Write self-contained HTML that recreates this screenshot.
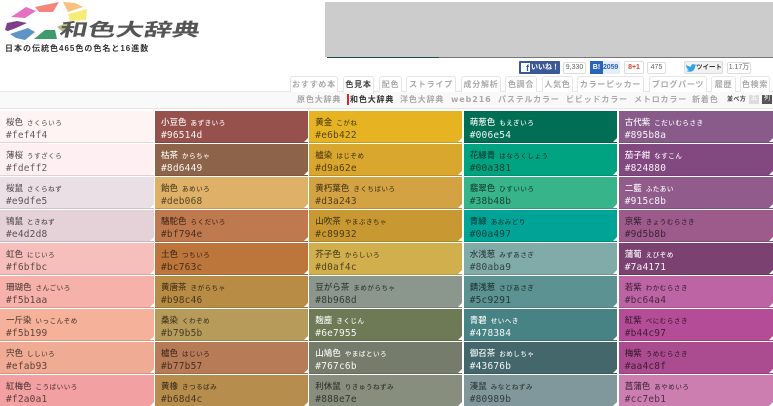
<!DOCTYPE html>
<html lang="ja"><head><meta charset="utf-8"><title>和色大辞典</title>
<style>
*{box-sizing:border-box;margin:0;padding:0}
html,body{width:773px;height:406px;overflow:hidden;background:#fff}
body{position:relative;font-family:"Liberation Sans","Noto Sans CJK JP",sans-serif;color:#333}
.a{position:absolute;white-space:nowrap}
.t{position:absolute;top:76px;height:16px;border:1px solid #e6e6e6;border-bottom:0;border-radius:3px 3px 0 0;background:#fff;color:#aaa;font-size:8px;letter-spacing:.75px;line-height:15px;text-align:center;font-weight:700;white-space:nowrap;overflow:hidden}
.s{position:absolute;top:94px;font-size:8px;letter-spacing:.85px;line-height:11px;color:#aaa;font-weight:700;white-space:nowrap}
.c{position:absolute;top:110.5px}
.r{position:relative;height:32.1px;margin-bottom:1px;padding:5px 0 0 6px;color:rgba(0,0,0,.62);border-bottom:1px solid rgba(0,0,0,.12);overflow:hidden;white-space:nowrap;font-size:8.5px;line-height:12px}
.r:after{content:"";position:absolute;right:0;bottom:0;border-style:solid;border-width:0 0 4px 4px;border-color:transparent transparent #fff transparent}
.w{color:rgba(255,255,255,.92)}
.r b{font-size:8.5px;font-weight:500;line-height:12px;margin-right:4px}
.r i{font-style:normal;font-size:6.5px;letter-spacing:.55px;font-weight:500;line-height:12px}
.r u{display:block;text-decoration:none;font-family:"DejaVu Sans Mono","Liberation Mono",monospace;font-size:9.5px;letter-spacing:.2px;line-height:11px;font-weight:400}
.n{position:absolute;top:62px;height:12px;border:1px solid #ddd;background:#fff;font-size:7px;line-height:10px;text-align:center;color:#666;border-radius:2px}
</style></head><body>

<svg class="a" style="left:0;top:0" width="100" height="42" viewBox="0 0 100 42">
<polygon points="11,17 26,7 36,11 25,18" fill="#e56fc0"/>
<polygon points="35,7 59,2 53,12 39,12" fill="#f4867c"/>
<polygon points="63,2 75,3 83,7 68,12" fill="#f8c27e"/>
<polygon points="68,14 87,9 86,20 70,21" fill="#f8ec78"/>
<polygon points="57,27 68,22 68,36" fill="#b5b980"/>
<polygon points="34,39 45,30 55,30 57,39" fill="#3f9a6c"/>
<polygon points="10,34 28,28 35,32 25,40 16,38" fill="#5e94c6"/>
<polygon points="5,30 7,23 17,21 27,23 16,28 8,31" fill="#7c3f88"/>
</svg>
<div class="a" style="left:62px;top:20px;font-size:18px;line-height:20px;font-weight:700;color:#555;transform-origin:0 0;transform:skewX(-12deg) scaleX(1.56);letter-spacing:0">和色大辞典</div>
<div class="a" style="left:5px;top:43px;font-size:8px;line-height:12px;font-weight:700;color:#333;letter-spacing:1px">日本の伝統色465色の色名と16進数</div>

<div class="a" style="left:325px;top:2px;width:448px;height:55px;background:#cccccc"></div>
<div class="a" style="left:327px;top:57px;width:112px;height:1px;background:#1f4a4a"></div>
<div class="a" style="left:439px;top:57px;width:334px;height:1px;background:#777"></div>

<div class="a" style="left:519px;top:61px;width:41px;height:13px;background:#3b5998;color:#fff;font-size:7px;line-height:13px;font-weight:700;padding-left:12px;border-radius:1px">いいね！</div>
<div class="a" style="left:521px;top:63px;width:9px;height:9px;background:#fff;color:#3b5998;font-size:9px;line-height:10px;text-align:right;font-weight:700;padding-right:1px">f</div>
<div class="n" style="left:563px;width:23px">9,330</div>
<div class="a" style="left:590px;top:61px;width:30px;height:13px;background:#e4eefa"></div>
<div class="a" style="left:590px;top:61px;width:13px;height:13px;background:#2a64b8;color:#fff;font-size:7px;line-height:13px;text-align:center;font-weight:700">B!</div>
<div class="a" style="left:603px;top:61px;font-size:7px;line-height:13px;color:#2a64b8;font-weight:700;letter-spacing:-.1px">2059</div>
<div class="a" style="left:624px;top:61px;width:20px;height:13px;border:1px solid #ddd;color:#d9432f;font-size:7px;line-height:11px;text-align:center;font-weight:700;border-radius:2px">8+1</div>
<div class="n" style="left:647px;width:19px">475</div>
<div class="a" style="left:684px;top:61px;width:39px;height:13px;border:1px solid #ddd;background:#f2f2f2;font-size:6.5px;line-height:11px;padding-left:11px;font-weight:700;color:#333;border-radius:2px">ツイート</div>
<svg class="a" style="left:686px;top:63px" width="10" height="9" viewBox="0 0 10 9"><path d="M0 1.5C1.5 3 3 3.6 5 3.7 4.8 1.5 7.2.3 8.6 1.6L10 1.1 9.2 2.3 10 2.1 9.2 3C9.2 6.2 6.5 9 3.6 8.8 2.2 8.8 1 8.4 0 7.8 1.2 7.9 2.2 7.6 3 7 1.9 6.9 1.3 6.3 1 5.4H1.8C.8 5 .2 4.2.2 3.2L1 3.4C.2 2.8 0 2.2 0 1.5Z" fill="#2ea3e0"/></svg>
<div class="n" style="left:727px;width:24px">1.17万</div>

<div class="a" style="left:0;top:91px;width:773px;height:18px;background:#f9f9f9;border-top:1px solid #e8e8e8;border-bottom:1px solid #e4e4e4"></div>

<div class="t" style="left:290px;width:48px">おすすめ本</div>
<div class="t" style="left:343px;width:31px;color:#444;height:17px;z-index:2">色見本</div>
<div class="t" style="left:379px;width:23px">配色</div>
<div class="t" style="left:406px;width:50px">ストライプ</div>
<div class="t" style="left:461px;width:40px">成分解析</div>
<div class="t" style="left:505px;width:32px">色調合</div>
<div class="t" style="left:542px;width:31px">人気色</div>
<div class="t" style="left:577px;width:67px">カラーピッカー</div>
<div class="t" style="left:649px;width:58px">ブログパーツ</div>
<div class="t" style="left:711px;width:25px">履歴</div>
<div class="t" style="left:740px;width:30px">色検索</div>

<div class="s" style="left:297px">原色大辞典</div>
<div class="a" style="left:347px;top:94px;width:2px;height:11px;background:#e3222c"></div>
<div class="s" style="left:350px;color:#333">和色大辞典</div>
<div class="s" style="left:400px">洋色大辞典</div>
<div class="s" style="left:451px;font-family:'DejaVu Sans',sans-serif;letter-spacing:.9px;font-size:8px">web216</div>
<div class="s" style="left:498px">パステルカラー</div>
<div class="s" style="left:566px">ビビッドカラー</div>
<div class="s" style="left:634px">メトロカラー</div>
<div class="s" style="left:692px">新着色</div>
<div class="s" style="left:727px;top:95px;color:#444;font-size:6px;letter-spacing:.4px">並べ方</div>
<div class="a" style="left:749px;top:95px;width:10px;height:9px;background:#ddd;color:#fff;font-size:6px;line-height:9px;text-align:center">五</div>
<div class="a" style="left:762px;top:95px;width:10px;height:9px;background:#555;color:#fff;font-size:6px;line-height:9px;text-align:center">列</div>

<div class="c" style="left:0;width:153.5px">
<div class="r" style="background:#fef4f4"><b>桜色</b><i>さくらいろ</i><u>#fef4f4</u></div>
<div class="r" style="background:#fdeff2"><b>薄桜</b><i>うすざくら</i><u>#fdeff2</u></div>
<div class="r" style="background:#e9dfe5"><b>桜鼠</b><i>さくらねず</i><u>#e9dfe5</u></div>
<div class="r" style="background:#e4d2d8"><b>鴇鼠</b><i>ときねず</i><u>#e4d2d8</u></div>
<div class="r" style="background:#f6bfbc"><b>虹色</b><i>にじいろ</i><u>#f6bfbc</u></div>
<div class="r" style="background:#f5b1aa"><b>珊瑚色</b><i>さんごいろ</i><u>#f5b1aa</u></div>
<div class="r" style="background:#f5b199"><b>一斤染</b><i>いっこんぞめ</i><u>#f5b199</u></div>
<div class="r" style="background:#efab93"><b>宍色</b><i>ししいろ</i><u>#efab93</u></div>
<div class="r" style="background:#f2a0a1"><b>紅梅色</b><i>こうばいいろ</i><u>#f2a0a1</u></div>
</div>

<div class="c" style="left:155px;width:153px">
<div class="r w" style="background:#96514d"><b>小豆色</b><i>あずきいろ</i><u>#96514d</u></div>
<div class="r w" style="background:#8d6449"><b>枯茶</b><i>からちゃ</i><u>#8d6449</u></div>
<div class="r" style="background:#deb068"><b>飴色</b><i>あめいろ</i><u>#deb068</u></div>
<div class="r" style="background:#bf794e"><b>駱駝色</b><i>らくだいろ</i><u>#bf794e</u></div>
<div class="r" style="background:#bc763c"><b>土色</b><i>つちいろ</i><u>#bc763c</u></div>
<div class="r" style="background:#b98c46"><b>黄唐茶</b><i>きがらちゃ</i><u>#b98c46</u></div>
<div class="r" style="background:#b79b5b"><b>桑染</b><i>くわぞめ</i><u>#b79b5b</u></div>
<div class="r" style="background:#b77b57"><b>櫨色</b><i>はじいろ</i><u>#b77b57</u></div>
<div class="r" style="background:#b68d4c"><b>黄橡</b><i>きつるばみ</i><u>#b68d4c</u></div>
</div>

<div class="c" style="left:309.3px;width:153px">
<div class="r" style="background:#e6b422"><b>黄金</b><i>こがね</i><u>#e6b422</u></div>
<div class="r" style="background:#d9a62e"><b>櫨染</b><i>はじぞめ</i><u>#d9a62e</u></div>
<div class="r" style="background:#d3a243"><b>黄朽葉色</b><i>きくちばいろ</i><u>#d3a243</u></div>
<div class="r" style="background:#c89932"><b>山吹茶</b><i>やまぶきちゃ</i><u>#c89932</u></div>
<div class="r" style="background:#d0af4c"><b>芥子色</b><i>からしいろ</i><u>#d0af4c</u></div>
<div class="r" style="background:#8b968d"><b>豆がら茶</b><i>まめがらちゃ</i><u>#8b968d</u></div>
<div class="r w" style="background:#6e7955"><b>麹塵</b><i>きくじん</i><u>#6e7955</u></div>
<div class="r w" style="background:#767c6b"><b>山鳩色</b><i>やまばといろ</i><u>#767c6b</u></div>
<div class="r" style="background:#888e7e"><b>利休鼠</b><i>りきゅうねずみ</i><u>#888e7e</u></div>
</div>

<div class="c" style="left:463.7px;width:153.5px">
<div class="r w" style="background:#006e54"><b>萌葱色</b><i>もえぎいろ</i><u>#006e54</u></div>
<div class="r" style="background:#00a381"><b>花緑青</b><i>はなろくしょう</i><u>#00a381</u></div>
<div class="r" style="background:#38b48b"><b>翡翠色</b><i>ひすいいろ</i><u>#38b48b</u></div>
<div class="r" style="background:#00a497"><b>青緑</b><i>あおみどり</i><u>#00a497</u></div>
<div class="r" style="background:#80aba9"><b>水浅葱</b><i>みずあさぎ</i><u>#80aba9</u></div>
<div class="r" style="background:#5c9291"><b>錆浅葱</b><i>さびあさぎ</i><u>#5c9291</u></div>
<div class="r w" style="background:#478384"><b>青碧</b><i>せいへき</i><u>#478384</u></div>
<div class="r w" style="background:#43676b"><b>御召茶</b><i>おめしちゃ</i><u>#43676b</u></div>
<div class="r" style="background:#80989b"><b>湊鼠</b><i>みなとねずみ</i><u>#80989b</u></div>
</div>

<div class="c" style="left:618.7px;width:154.3px">
<div class="r w" style="background:#895b8a"><b>古代紫</b><i>こだいむらさき</i><u>#895b8a</u></div>
<div class="r w" style="background:#824880"><b>茄子紺</b><i>なすこん</i><u>#824880</u></div>
<div class="r w" style="background:#915c8b"><b>二藍</b><i>ふたあい</i><u>#915c8b</u></div>
<div class="r" style="background:#9d5b8b"><b>京紫</b><i>きょうむらさき</i><u>#9d5b8b</u></div>
<div class="r w" style="background:#7a4171"><b>蒲葡</b><i>えびぞめ</i><u>#7a4171</u></div>
<div class="r" style="background:#bc64a4"><b>若紫</b><i>わかむらさき</i><u>#bc64a4</u></div>
<div class="r" style="background:#b44c97"><b>紅紫</b><i>べにむらさき</i><u>#b44c97</u></div>
<div class="r" style="background:#aa4c8f"><b>梅紫</b><i>うめむらさき</i><u>#aa4c8f</u></div>
<div class="r" style="background:#cc7eb1"><b>菖蒲色</b><i>あやめいろ</i><u>#cc7eb1</u></div>
</div>
</body></html>
